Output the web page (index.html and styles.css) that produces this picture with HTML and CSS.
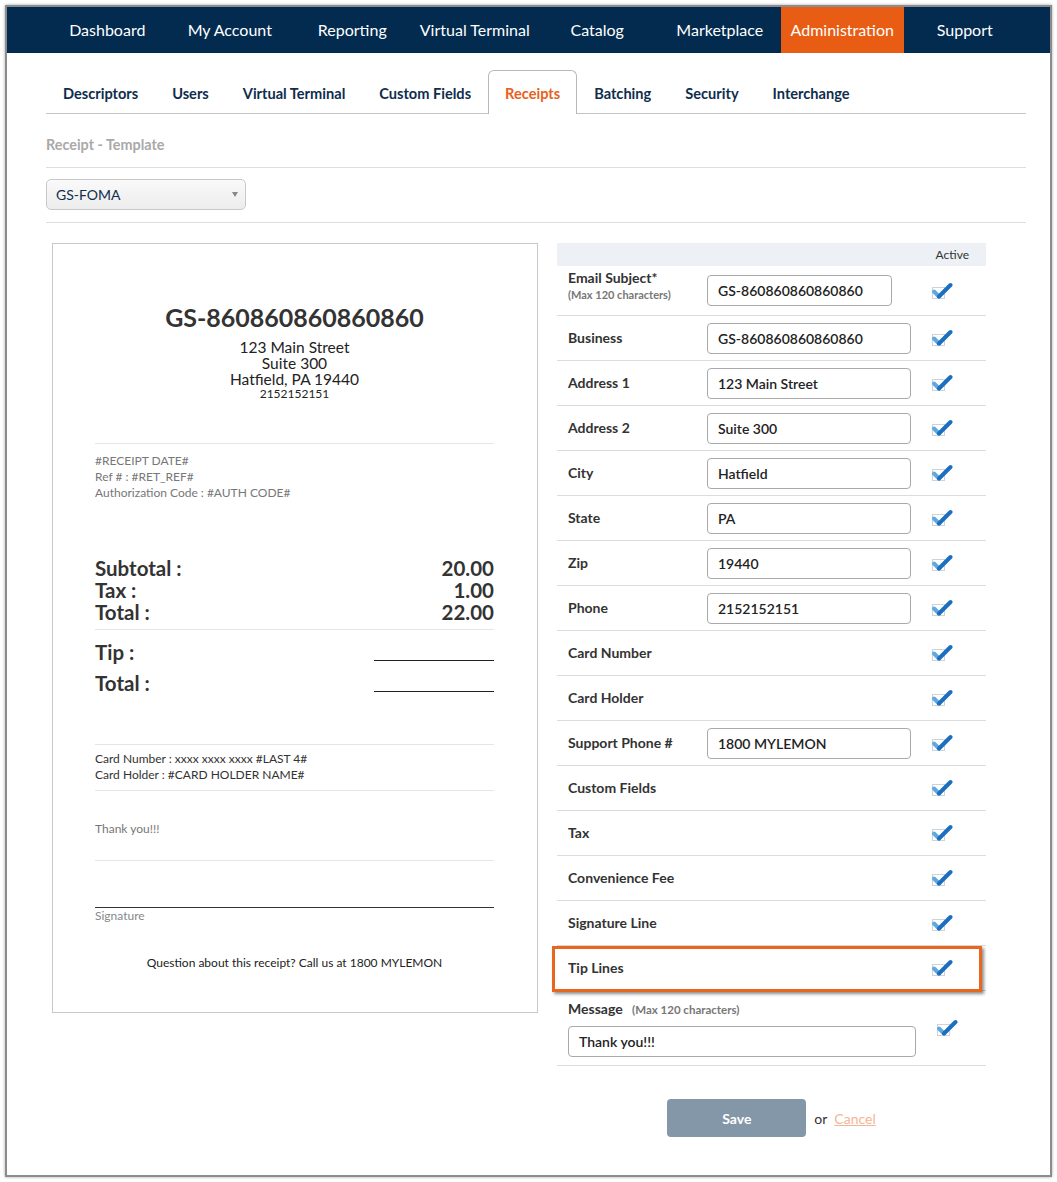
FILE: index.html
```html
<!DOCTYPE html>
<html lang="en">
<head>
<meta charset="utf-8">
<title>Administration - Receipts</title>
<link rel="stylesheet" href="styles.css">
</head>
<body>
<div class="frame">
  <nav class="topnav">
    <ul>
      <li><a href="#">Dashboard</a></li>
      <li><a href="#">My Account</a></li>
      <li><a href="#">Reporting</a></li>
      <li><a href="#">Virtual Terminal</a></li>
      <li><a href="#">Catalog</a></li>
      <li><a href="#">Marketplace</a></li>
      <li class="active"><a href="#">Administration</a></li>
      <li><a href="#">Support</a></li>
    </ul>
  </nav>
  <div class="container">
    <ul class="tabs">
      <li><a href="#">Descriptors</a></li>
      <li><a href="#">Users</a></li>
      <li><a href="#">Virtual Terminal</a></li>
      <li><a href="#">Custom Fields</a></li>
      <li class="active"><a href="#">Receipts</a></li>
      <li><a href="#">Batching</a></li>
      <li><a href="#">Security</a></li>
      <li><a href="#">Interchange</a></li>
    </ul>
    <h2 class="section-title">Receipt - Template</h2>
    <div class="select-row">
      <div class="select">GS-FOMA<span class="caret"></span></div>
    </div>
    <div class="main">
      <div class="receipt">
        <div class="r-title">GS-860860860860860</div>
        <div class="r-address">
          <div>123 Main Street</div>
          <div>Suite 300</div>
          <div>Hatfield, PA 19440</div>
        </div>
        <div class="r-phone">2152152151</div>
        <hr class="r-hr r-hr-1">
        <div class="r-meta">
          <div>#RECEIPT DATE#</div>
          <div>Ref # : #RET_REF#</div>
          <div>Authorization Code : #AUTH CODE#</div>
        </div>
        <div class="r-totals">
          <div class="r-line"><span>Subtotal :</span><span>20.00</span></div>
          <div class="r-line"><span>Tax :</span><span>1.00</span></div>
          <div class="r-line"><span>Total :</span><span>22.00</span></div>
        </div>
        <hr class="r-hr r-hr-2">
        <div class="r-tip"><span>Tip :</span><span class="blank"></span></div>
        <div class="r-tip r-tip-2"><span>Total :</span><span class="blank"></span></div>
        <hr class="r-hr r-hr-3">
        <div class="r-card">
          <div>Card Number : xxxx xxxx xxxx #LAST 4#</div>
          <div>Card Holder : #CARD HOLDER NAME#</div>
        </div>
        <hr class="r-hr r-hr-4">
        <div class="r-thanks">Thank you!!!</div>
        <hr class="r-hr r-hr-5">
        <div class="r-sign">Signature</div>
        <div class="r-question">Question about this receipt? Call us at 1800 MYLEMON</div>
      </div>

      <div class="settings">
        <div class="s-head">Active</div>

        <div class="s-row s-row-tall">
          <div class="s-label">Email Subject*<small>(Max 120 characters)</small></div>
          <div class="s-field"><div class="input input-short">GS-860860860860860</div></div>
          <div class="s-check"><svg class="chk" viewBox="0 0 22 18"><rect x="1.5" y="5.5" width="12" height="11" fill="none" stroke="#cfd3d6" stroke-width="1"/><path d="M3 9.5 L8 14.5" stroke="#5fa9e3" stroke-width="4" stroke-linecap="round"/><path d="M8 14.5 L19.5 3" stroke="#1c6fc0" stroke-width="4" stroke-linecap="round"/></svg></div>
        </div>

        <div class="s-row">
          <div class="s-label">Business</div>
          <div class="s-field"><div class="input">GS-860860860860860</div></div>
          <div class="s-check"><svg class="chk" viewBox="0 0 22 18"><rect x="1.5" y="5.5" width="12" height="11" fill="none" stroke="#cfd3d6" stroke-width="1"/><path d="M3 9.5 L8 14.5" stroke="#5fa9e3" stroke-width="4" stroke-linecap="round"/><path d="M8 14.5 L19.5 3" stroke="#1c6fc0" stroke-width="4" stroke-linecap="round"/></svg></div>
        </div>

        <div class="s-row">
          <div class="s-label">Address 1</div>
          <div class="s-field"><div class="input">123 Main Street</div></div>
          <div class="s-check"><svg class="chk" viewBox="0 0 22 18"><rect x="1.5" y="5.5" width="12" height="11" fill="none" stroke="#cfd3d6" stroke-width="1"/><path d="M3 9.5 L8 14.5" stroke="#5fa9e3" stroke-width="4" stroke-linecap="round"/><path d="M8 14.5 L19.5 3" stroke="#1c6fc0" stroke-width="4" stroke-linecap="round"/></svg></div>
        </div>

        <div class="s-row">
          <div class="s-label">Address 2</div>
          <div class="s-field"><div class="input">Suite 300</div></div>
          <div class="s-check"><svg class="chk" viewBox="0 0 22 18"><rect x="1.5" y="5.5" width="12" height="11" fill="none" stroke="#cfd3d6" stroke-width="1"/><path d="M3 9.5 L8 14.5" stroke="#5fa9e3" stroke-width="4" stroke-linecap="round"/><path d="M8 14.5 L19.5 3" stroke="#1c6fc0" stroke-width="4" stroke-linecap="round"/></svg></div>
        </div>

        <div class="s-row">
          <div class="s-label">City</div>
          <div class="s-field"><div class="input">Hatfield</div></div>
          <div class="s-check"><svg class="chk" viewBox="0 0 22 18"><rect x="1.5" y="5.5" width="12" height="11" fill="none" stroke="#cfd3d6" stroke-width="1"/><path d="M3 9.5 L8 14.5" stroke="#5fa9e3" stroke-width="4" stroke-linecap="round"/><path d="M8 14.5 L19.5 3" stroke="#1c6fc0" stroke-width="4" stroke-linecap="round"/></svg></div>
        </div>

        <div class="s-row">
          <div class="s-label">State</div>
          <div class="s-field"><div class="input">PA</div></div>
          <div class="s-check"><svg class="chk" viewBox="0 0 22 18"><rect x="1.5" y="5.5" width="12" height="11" fill="none" stroke="#cfd3d6" stroke-width="1"/><path d="M3 9.5 L8 14.5" stroke="#5fa9e3" stroke-width="4" stroke-linecap="round"/><path d="M8 14.5 L19.5 3" stroke="#1c6fc0" stroke-width="4" stroke-linecap="round"/></svg></div>
        </div>

        <div class="s-row">
          <div class="s-label">Zip</div>
          <div class="s-field"><div class="input">19440</div></div>
          <div class="s-check"><svg class="chk" viewBox="0 0 22 18"><rect x="1.5" y="5.5" width="12" height="11" fill="none" stroke="#cfd3d6" stroke-width="1"/><path d="M3 9.5 L8 14.5" stroke="#5fa9e3" stroke-width="4" stroke-linecap="round"/><path d="M8 14.5 L19.5 3" stroke="#1c6fc0" stroke-width="4" stroke-linecap="round"/></svg></div>
        </div>

        <div class="s-row">
          <div class="s-label">Phone</div>
          <div class="s-field"><div class="input">2152152151</div></div>
          <div class="s-check"><svg class="chk" viewBox="0 0 22 18"><rect x="1.5" y="5.5" width="12" height="11" fill="none" stroke="#cfd3d6" stroke-width="1"/><path d="M3 9.5 L8 14.5" stroke="#5fa9e3" stroke-width="4" stroke-linecap="round"/><path d="M8 14.5 L19.5 3" stroke="#1c6fc0" stroke-width="4" stroke-linecap="round"/></svg></div>
        </div>

        <div class="s-row">
          <div class="s-label">Card Number</div>
          <div class="s-field"></div>
          <div class="s-check"><svg class="chk" viewBox="0 0 22 18"><rect x="1.5" y="5.5" width="12" height="11" fill="none" stroke="#cfd3d6" stroke-width="1"/><path d="M3 9.5 L8 14.5" stroke="#5fa9e3" stroke-width="4" stroke-linecap="round"/><path d="M8 14.5 L19.5 3" stroke="#1c6fc0" stroke-width="4" stroke-linecap="round"/></svg></div>
        </div>

        <div class="s-row">
          <div class="s-label">Card Holder</div>
          <div class="s-field"></div>
          <div class="s-check"><svg class="chk" viewBox="0 0 22 18"><rect x="1.5" y="5.5" width="12" height="11" fill="none" stroke="#cfd3d6" stroke-width="1"/><path d="M3 9.5 L8 14.5" stroke="#5fa9e3" stroke-width="4" stroke-linecap="round"/><path d="M8 14.5 L19.5 3" stroke="#1c6fc0" stroke-width="4" stroke-linecap="round"/></svg></div>
        </div>

        <div class="s-row">
          <div class="s-label">Support Phone #</div>
          <div class="s-field"><div class="input">1800 MYLEMON</div></div>
          <div class="s-check"><svg class="chk" viewBox="0 0 22 18"><rect x="1.5" y="5.5" width="12" height="11" fill="none" stroke="#cfd3d6" stroke-width="1"/><path d="M3 9.5 L8 14.5" stroke="#5fa9e3" stroke-width="4" stroke-linecap="round"/><path d="M8 14.5 L19.5 3" stroke="#1c6fc0" stroke-width="4" stroke-linecap="round"/></svg></div>
        </div>

        <div class="s-row">
          <div class="s-label">Custom Fields</div>
          <div class="s-field"></div>
          <div class="s-check"><svg class="chk" viewBox="0 0 22 18"><rect x="1.5" y="5.5" width="12" height="11" fill="none" stroke="#cfd3d6" stroke-width="1"/><path d="M3 9.5 L8 14.5" stroke="#5fa9e3" stroke-width="4" stroke-linecap="round"/><path d="M8 14.5 L19.5 3" stroke="#1c6fc0" stroke-width="4" stroke-linecap="round"/></svg></div>
        </div>

        <div class="s-row">
          <div class="s-label">Tax</div>
          <div class="s-field"></div>
          <div class="s-check"><svg class="chk" viewBox="0 0 22 18"><rect x="1.5" y="5.5" width="12" height="11" fill="none" stroke="#cfd3d6" stroke-width="1"/><path d="M3 9.5 L8 14.5" stroke="#5fa9e3" stroke-width="4" stroke-linecap="round"/><path d="M8 14.5 L19.5 3" stroke="#1c6fc0" stroke-width="4" stroke-linecap="round"/></svg></div>
        </div>

        <div class="s-row">
          <div class="s-label">Convenience Fee</div>
          <div class="s-field"></div>
          <div class="s-check"><svg class="chk" viewBox="0 0 22 18"><rect x="1.5" y="5.5" width="12" height="11" fill="none" stroke="#cfd3d6" stroke-width="1"/><path d="M3 9.5 L8 14.5" stroke="#5fa9e3" stroke-width="4" stroke-linecap="round"/><path d="M8 14.5 L19.5 3" stroke="#1c6fc0" stroke-width="4" stroke-linecap="round"/></svg></div>
        </div>

        <div class="s-row">
          <div class="s-label">Signature Line</div>
          <div class="s-field"></div>
          <div class="s-check"><svg class="chk" viewBox="0 0 22 18"><rect x="1.5" y="5.5" width="12" height="11" fill="none" stroke="#cfd3d6" stroke-width="1"/><path d="M3 9.5 L8 14.5" stroke="#5fa9e3" stroke-width="4" stroke-linecap="round"/><path d="M8 14.5 L19.5 3" stroke="#1c6fc0" stroke-width="4" stroke-linecap="round"/></svg></div>
        </div>

        <div class="s-row s-row-highlight">
          <div class="s-label">Tip Lines</div>
          <div class="s-field"></div>
          <div class="s-check"><svg class="chk" viewBox="0 0 22 18"><rect x="1.5" y="5.5" width="12" height="11" fill="none" stroke="#cfd3d6" stroke-width="1"/><path d="M3 9.5 L8 14.5" stroke="#5fa9e3" stroke-width="4" stroke-linecap="round"/><path d="M8 14.5 L19.5 3" stroke="#1c6fc0" stroke-width="4" stroke-linecap="round"/></svg></div>
          <div class="highlight"></div>
        </div>

        <div class="s-message">
          <div class="s-msg-body">
            <div class="s-msg-label">Message <small>(Max 120 characters)</small></div>
            <div class="input input-msg">Thank you!!!</div>
          </div>
          <div class="s-msg-check"><svg class="chk" viewBox="0 0 22 18"><rect x="1.5" y="5.5" width="12" height="11" fill="none" stroke="#cfd3d6" stroke-width="1"/><path d="M3 9.5 L8 14.5" stroke="#5fa9e3" stroke-width="4" stroke-linecap="round"/><path d="M8 14.5 L19.5 3" stroke="#1c6fc0" stroke-width="4" stroke-linecap="round"/></svg></div>
        </div>

        <div class="actions">
          <button class="btn-save" type="button">Save</button>
          <span class="or">or</span>
          <a href="#" class="cancel">Cancel</a>
        </div>
      </div>
    </div>
  </div>
</div>
</body>
</html>
```
FILE: styles.css
```css
* { box-sizing: border-box; }
html, body { margin: 0; padding: 0; background: #fff; }
body { font-family: Lato, "Open Sans", "Liberation Sans", sans-serif; color: #333; }
ul { list-style: none; margin: 0; padding: 0; }
a { text-decoration: none; }

.frame {
  margin: 5px;
  width: 1047px;
  height: 1172px;
  border: 2px solid #8c8c8c;
  box-shadow: 0 0 3px rgba(0,0,0,0.35);
  background: #fff;
  overflow: hidden;
}

/* top navigation */
.topnav { background: #022b4f; height: 46px; }
.topnav ul { display: flex; padding-left: 39px; height: 46px; }
.topnav li { width: 122.5px; height: 46px; text-align: center; }
.topnav li a { display: block; line-height: 46px; color: #fff; font-size: 16px; }
.topnav li.active { background: #e85c14; }

.container { margin-left: 39px; width: 980px; }

/* tabs */
.tabs {
  display: flex;
  align-items: flex-start;
  margin-top: 17px;
  height: 44px;
  border-bottom: 1px solid #c4c4c4;
}
.tabs li { height: 43px; padding: 0 17px; }
.tabs li a { display: block; padding-top: 4px; line-height: 39px; font-size: 14.6px; font-weight: 700; color: #0f2d4d; }
.tabs li.active {
  height: 44px;
  padding: 0 16px;
  border: 1px solid #b8b8b8;
  border-bottom: none;
  border-radius: 6px 6px 0 0;
  background: #fff;
  margin-bottom: -1px;
}
.tabs li.active a { padding-top: 3px; color: #e8601c; }

.section-title {
  margin: 0;
  padding: 22px 0 13px;
  font-size: 14.4px;
  line-height: 18px;
  font-weight: 700;
  color: #a9a9a9;
  border-bottom: 1px solid #dedede;
}

.select-row { padding: 11px 0 12px; border-bottom: 1px solid #dedede; }
.select {
  position: relative;
  width: 200px;
  height: 31px;
  border: 1px solid #c9c9c9;
  border-radius: 5px;
  background: linear-gradient(#fafafa, #ececec);
  padding-left: 9px;
  line-height: 29px;
  font-size: 14px;
  color: #0f2d4d;
}
.caret {
  position: absolute;
  right: 7px;
  top: 12px;
  width: 0; height: 0;
  border-left: 3.5px solid transparent;
  border-right: 3.5px solid transparent;
  border-top: 5px solid #888;
}

.main { display: flex; align-items: flex-start; gap: 19px; padding: 20px 0 0 6px; }

/* receipt preview */
.receipt {
  width: 486px;
  height: 770px;
  border: 1px solid #c8c8c8;
  padding: 58px 43px 0 42px;
  color: #222;
}
.r-title { text-align: center; font-size: 25px; line-height: 30px; font-weight: 700; color: #333; }
.r-address { text-align: center; font-size: 15.5px; line-height: 16px; margin-top: 7px; }
.r-phone { text-align: center; font-size: 12px; line-height: 14px; }
.r-hr { border: none; border-top: 1px solid #e6e6e6; margin: 0; }
.r-hr-1 { margin-top: 42px; }
.r-meta { padding-top: 9px; font-size: 12px; line-height: 16px; color: #777; }
.r-totals { margin-top: 56px; }
.r-line { display: flex; justify-content: space-between; font-size: 20.5px; line-height: 22px; font-weight: 700; color: #333; }
.r-hr-2 { margin-top: 6px; }
.r-tip { display: flex; justify-content: space-between; align-items: flex-start; margin-top: 10px; height: 24px; font-size: 20.5px; line-height: 24px; font-weight: 700; color: #333; }
.r-tip-2 { margin-top: 7px; }
.blank { width: 120px; height: 21px; border-bottom: 1px solid #222; }
.r-hr-3 { margin-top: 49px; }
.r-card { padding-top: 6px; font-size: 12px; line-height: 16px; color: #333; }
.r-hr-4 { margin-top: 7px; }
.r-thanks { margin-top: 30px; font-size: 12px; line-height: 16px; color: #777; }
.r-hr-5 { margin-top: 23px; }
.r-sign { margin-top: 46px; border-top: 1px solid #333; font-size: 12px; line-height: 16px; color: #888; }
.r-question { margin-top: 31px; text-align: center; font-size: 12px; line-height: 16px; color: #222; }

/* settings table */
.settings { width: 429px; }
.s-head {
  height: 23px;
  background: #edf1f6;
  text-align: right;
  padding-right: 17px;
  font-size: 12px;
  line-height: 23px;
  color: #333;
}
.s-row {
  position: relative;
  display: flex;
  align-items: center;
  height: 45px;
  border-bottom: 1px solid #dcdcdc;
}
.s-row-tall { height: 50px; }
.s-label {
  width: 150px;
  padding-left: 11px;
  font-size: 14px;
  font-weight: 700;
  color: #333;
  line-height: 18px;
}
.s-label small { display: block; font-size: 11px; line-height: 16px; color: #777; }
.s-row-tall .s-label { margin-top: -10px; }
.s-field { width: 218px; }
.input {
  width: 204px;
  height: 31px;
  border: 1px solid #a9a9a9;
  border-radius: 4px;
  padding-left: 10px;
  font-size: 14px;
  line-height: 29px;
  font-weight: 600;
  color: #222;
  background: #fff;
}
.input-short { width: 185px; }
.s-check { width: 34px; display: flex; justify-content: center; }
.chk { width: 22px; height: 18px; display: block; }

.highlight {
  position: absolute;
  left: -5px;
  top: 0;
  width: 430px;
  height: 46px;
  border: 3px solid #e8661e;
  box-shadow: 2px 2px 3px rgba(0,0,0,0.45);
}

.s-message {
  display: flex;
  align-items: flex-start;
  height: 75px;
  border-bottom: 1px solid #dcdcdc;
}
.s-msg-body { width: 359px; padding-left: 11px; padding-top: 9px; }
.s-msg-label { font-size: 14px; font-weight: 700; line-height: 18px; color: #333; }
.s-msg-label small { font-size: 11.5px; color: #777; margin-left: 6px; }
.input-msg { width: 348px; height: 31px; margin-top: 7px; }
.s-msg-check { width: 42px; display: flex; justify-content: center; padding-top: 28px; padding-left: 20px; }

.actions {
  display: flex;
  align-items: center;
  justify-content: center;
  margin-top: 33px;
}
.btn-save {
  width: 139px;
  height: 38px;
  border: none;
  border-radius: 4px;
  background: #8397a9;
  color: #fff;
  font-family: inherit;
  font-size: 14px;
  font-weight: 700;
}
.or { margin: 0 7px 0 8px; font-size: 14px; color: #333; }
.cancel { font-size: 14px; color: #f4b597; text-decoration: underline; }
```
